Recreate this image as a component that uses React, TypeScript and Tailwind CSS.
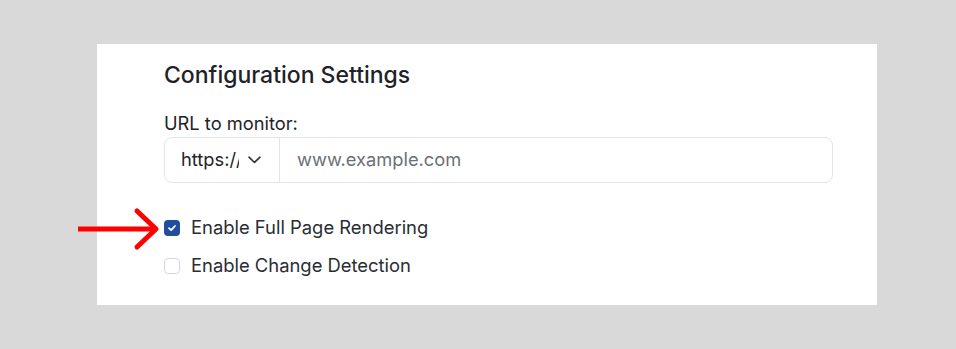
function Checkbox({ checked, label }: { checked?: boolean; label: string }) {
  return (
    <label className="flex items-center gap-[11px] h-[19px]">
      {checked ? (
        <span className="w-4 h-4 rounded-[4px] bg-[#1f4e9c] flex items-center justify-center">
          <svg width="10" height="10" viewBox="0 0 10 10" fill="none">
            <path d="M2 5.2 L4.1 7.2 L8 3" stroke="white" strokeWidth="1.8" strokeLinecap="round" strokeLinejoin="round" />
          </svg>
        </span>
      ) : (
        <span className="w-4 h-4 rounded-[4px] border border-[#d4d7dd] bg-white" />
      )}
      <span className="text-[18.4px] text-[#2a2d33] leading-none">{label}</span>
    </label>
  );
}

export default function App() {
  return (
    <div className="relative w-[956px] h-[349px] bg-[#d9d9d9] pt-[44px] pl-[97px] font-['Inter',sans-serif]">
      <div className="w-[780px] h-[261px] bg-white pl-[67px] pr-[44px] pt-[18px]">
        <h2 className="text-[23px] font-medium text-[#1f2329] leading-[26px]">Configuration Settings</h2>
        <div className="mt-[24px] text-[18.3px] text-[#1f2329] leading-[22px]">URL to monitor:</div>
        <div className="mt-[3px] flex h-[46px] border border-[#e2e5ea] rounded-[8px]">
          <div className="w-[115px] shrink-0 flex items-center pl-[16px] border-r border-[#e2e5ea] text-[18.3px] text-[#1f2329]">
            <span className="w-[58px] shrink-0 overflow-hidden whitespace-nowrap">https://</span>
            <svg className="ml-[9px] shrink-0" width="13" height="8" viewBox="0 0 13 8" fill="none">
              <path d="M1 1.2 L6.5 6.5 L12 1.2" stroke="#2f3237" strokeWidth="1.6" strokeLinecap="round" strokeLinejoin="round" />
            </svg>
          </div>
          <div className="flex-1 flex items-center pl-[17px] text-[18.3px] text-[#6b6f76]">www.example.com</div>
        </div>
        <div className="mt-[35px] flex flex-col gap-[19px]">
          <Checkbox checked label="Enable Full Page Rendering" />
          <Checkbox label="Enable Change Detection" />
        </div>
      </div>
      <svg className="absolute left-[74px] top-[206px]" width="90" height="46" viewBox="0 0 90 46" fill="none">
        <path d="M4 23 H82" stroke="#ff0000" strokeWidth="5" strokeLinecap="butt" />
        <path d="M63 5 L82 23 L63 41" stroke="#ff0000" strokeWidth="5" strokeLinecap="round" strokeLinejoin="round" />
      </svg>
    </div>
  );
}
